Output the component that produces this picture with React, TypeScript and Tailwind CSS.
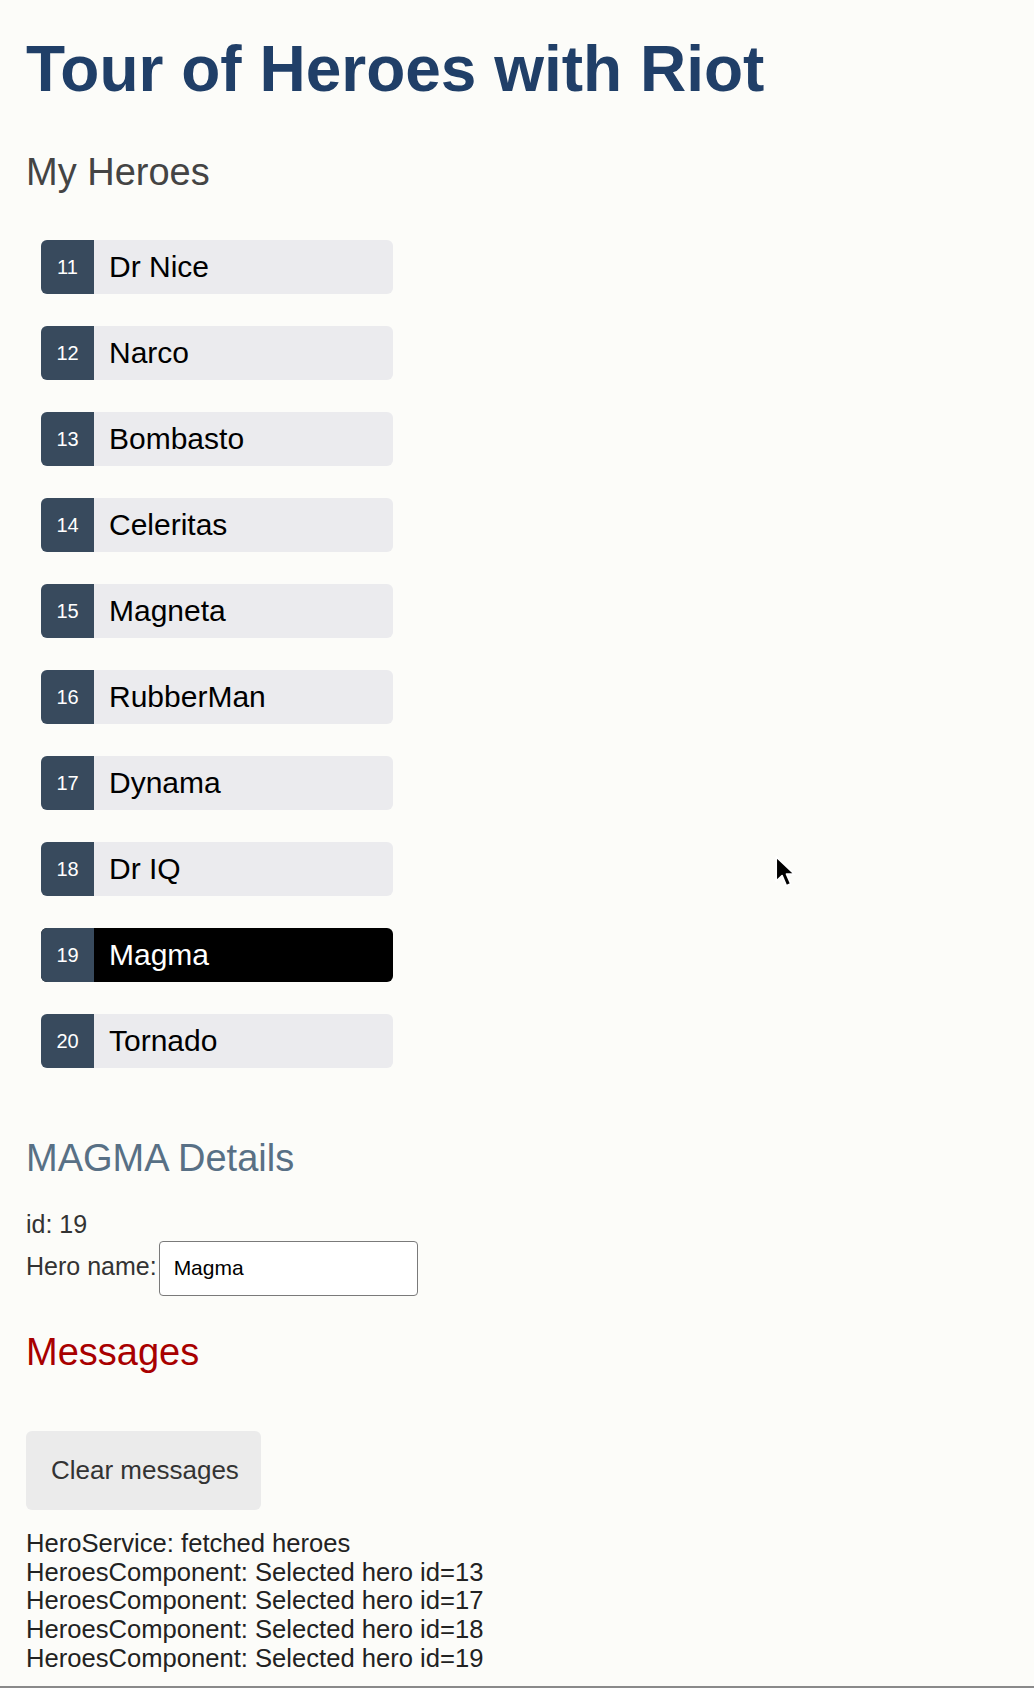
import React from "react";

type Hero = { id: number; name: string };

const heroes: Hero[] = [
  { id: 11, name: "Dr Nice" },
  { id: 12, name: "Narco" },
  { id: 13, name: "Bombasto" },
  { id: 14, name: "Celeritas" },
  { id: 15, name: "Magneta" },
  { id: 16, name: "RubberMan" },
  { id: 17, name: "Dynama" },
  { id: 18, name: "Dr IQ" },
  { id: 19, name: "Magma" },
  { id: 20, name: "Tornado" },
];

const messages = [
  "HeroService: fetched heroes",
  "HeroesComponent: Selected hero id=13",
  "HeroesComponent: Selected hero id=17",
  "HeroesComponent: Selected hero id=18",
  "HeroesComponent: Selected hero id=19",
];

const selectedId = 19;

const App: React.FC = () => {
  return (
    <div className="relative flex min-h-[1688px] flex-col border-b-2 border-[#8a8a8a] bg-[#fcfcf9] px-[26px] font-['Liberation_Sans',Arial,sans-serif] text-[#333]">
      <h1 className="mt-[37px] text-[64px] font-bold leading-[64px] text-[#203f68]">
        Tour of Heroes with Riot
      </h1>

      <h2 className="mt-[52px] text-[38px] font-normal leading-[38px] text-[#444]">
        My Heroes
      </h2>

      {/* hero list */}
      <ul className="ml-[15px] mt-[49px] flex w-[352px] flex-col gap-[32px]">
        {heroes.map((hero) => {
          const selected = hero.id === selectedId;
          return (
            <li
              key={hero.id}
              className={
                selected
                  ? "flex h-[54px] cursor-pointer items-center rounded-[6px] bg-black text-white"
                  : "flex h-[54px] cursor-pointer items-center rounded-[6px] bg-[#ebebee] text-black"
              }
            >
              <span className="flex h-full w-[53px] items-center justify-center rounded-l-[6px] bg-[#384a5d] text-[20px] text-white">
                {hero.id}
              </span>
              <span className="ml-[15px] text-[30px] leading-none">{hero.name}</span>
            </li>
          );
        })}
      </ul>

      {/* details */}
      <h2 className="mt-[71px] text-[38px] font-normal leading-[38px] text-[#587085]">
        MAGMA Details
      </h2>
      <div className="mt-[33px] text-[25px] leading-[28.75px]">id: 19</div>
      <div className="mt-[2px] flex items-baseline gap-[2px]">
        <label className="text-[25px] leading-[28.75px]">Hero name:</label>
        <input
          readOnly
          value="Magma"
          className="h-[55px] w-[259px] rounded-[4px] border border-[#7a7a7a] bg-white pl-[14px] text-[21px] text-black outline-none"
        />
      </div>

      {/* messages */}
      <h2 className="mt-[37px] text-[38px] font-normal leading-[38px] text-[#a80000]">
        Messages
      </h2>
      <div className="mt-[60px]">
        <button className="h-[79px] w-[235px] rounded-[6px] bg-[#ebebeb] pl-[25px] text-left text-[26px] text-[#333]">
          Clear messages
        </button>
      </div>
      <div className="mt-[19px] flex flex-col text-[25.6px] leading-[28.8px] text-[#222]">
        {messages.map((m, i) => (
          <div key={i}>{m}</div>
        ))}
      </div>

      {/* mouse pointer */}
      <svg
        className="absolute left-[774px] top-[855px]"
        width="24"
        height="34"
        viewBox="0 0 18 26"
      >
        <path
          d="M1.5 1.5 L1.5 20 L6 15.8 L9.3 23.5 L12.6 22 L9.4 14.6 L15.5 14.6 Z"
          fill="#000"
          stroke="#fff"
          strokeWidth="1.3"
          strokeLinejoin="round"
        />
      </svg>
    </div>
  );
};

export default App;
